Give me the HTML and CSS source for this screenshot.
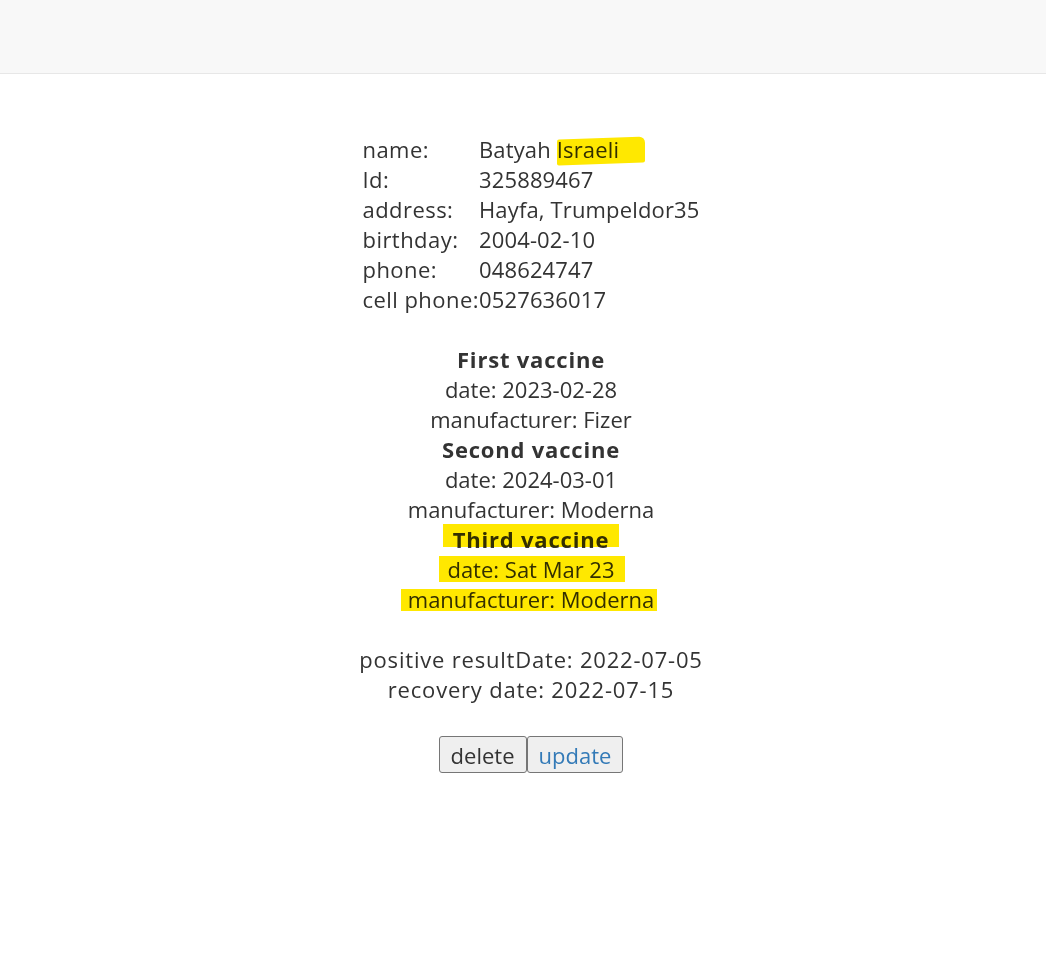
FILE: index.html
```html
<!DOCTYPE html>
<html>
<head>
<meta charset="utf-8">
<link rel="stylesheet" href="styles.css">
</head>
<body>
<header class="navbar"></header>
<main class="page">
  <div class="card">
    <table class="details">
      <tr><td class="label">name:</td><td>Batyah <span class="hl hl-name">Israeli</span></td></tr>
      <tr><td class="label">Id:</td><td>325889467</td></tr>
      <tr><td class="label">address:</td><td>Hayfa, Trumpeldor35</td></tr>
      <tr><td class="label">birthday:</td><td>2004-02-10</td></tr>
      <tr><td class="label">phone:</td><td>048624747</td></tr>
      <tr><td class="label">cell phone:</td><td>0527636017</td></tr>
    </table>
    <div class="gap"></div>
    <div class="vaccines">
      <div class="title">First vaccine</div>
      <div>date: 2023-02-28</div>
      <div>manufacturer: Fizer</div>
      <div class="title">Second vaccine</div>
      <div>date: 2024-03-01</div>
      <div>manufacturer: Moderna</div>
      <div class="title"><span class="hl hl-third">Third vaccine</span></div>
      <div><span class="hl hl-date">date: Sat Mar 23</span></div>
      <div><span class="hl hl-man">manufacturer: Moderna</span></div>
    </div>
    <div class="gap"></div>
    <div class="covid">
      <div>positive resultDate: 2022-07-05</div>
      <div>recovery date: 2022-07-15</div>
    </div>
    <div class="actions">
      <button class="btn">delete</button><button class="btn btn-link">update</button>
    </div>
  </div>
</main>
</body>
</html>
```
FILE: styles.css
```css
html, body {
  margin: 0;
  padding: 0;
  background: #fff;
}
body {
  font-family: "Open Sans", "Noto Sans", sans-serif;
  font-size: 22px;
  line-height: 30px;
  color: #333;
}
.navbar {
  height: 73px;
  background: #f8f8f8;
  border-bottom: 1px solid #e7e7e7;
}
.page {
  display: flex;
  justify-content: center;
  padding-top: 60px;
  padding-left: 16px;
}
.card {
  display: flex;
  flex-direction: column;
  align-items: center;
  text-align: center;
}
.details {
  border-collapse: collapse;
  text-align: left;
  letter-spacing: 0.15px;
}
.details td {
  padding: 0;
  vertical-align: top;
}
.details .label {
  letter-spacing: 0.45px;
}
.gap {
  height: 30px;
}
.title {
  font-weight: bold;
  letter-spacing: 0.8px;
}
.covid {
  letter-spacing: 0.8px;
}
.hl {
  position: relative;
}
.hl::before {
  content: "";
  position: absolute;
  background: #ffe800;
  mix-blend-mode: multiply;
}
.hl-name::before { left: 0px; right: -26px; top: 4px; bottom: 0px; transform: skewY(-2deg); border-radius: 2px 6px 2px 2px; }
.hl-third::before { left: -10px; right: -10px; top: 0px; bottom: 7px; }
.hl-date::before { left: -8px; right: -10px; top: 2px; bottom: 2px; }
.hl-man::before { left: -7px; right: -3px; top: 5px; bottom: 3px; }
.actions {
  margin-top: 32px;
  display: flex;
}
.btn {
  font-family: inherit;
  font-size: 22px;
  line-height: 26px;
  color: #333;
  background: #efefef;
  border: 1px solid #767676;
  border-radius: 3px;
  padding: 5px 11px 4px;
  margin: 0;
}
.btn-link {
  color: #337ab7;
}
```
